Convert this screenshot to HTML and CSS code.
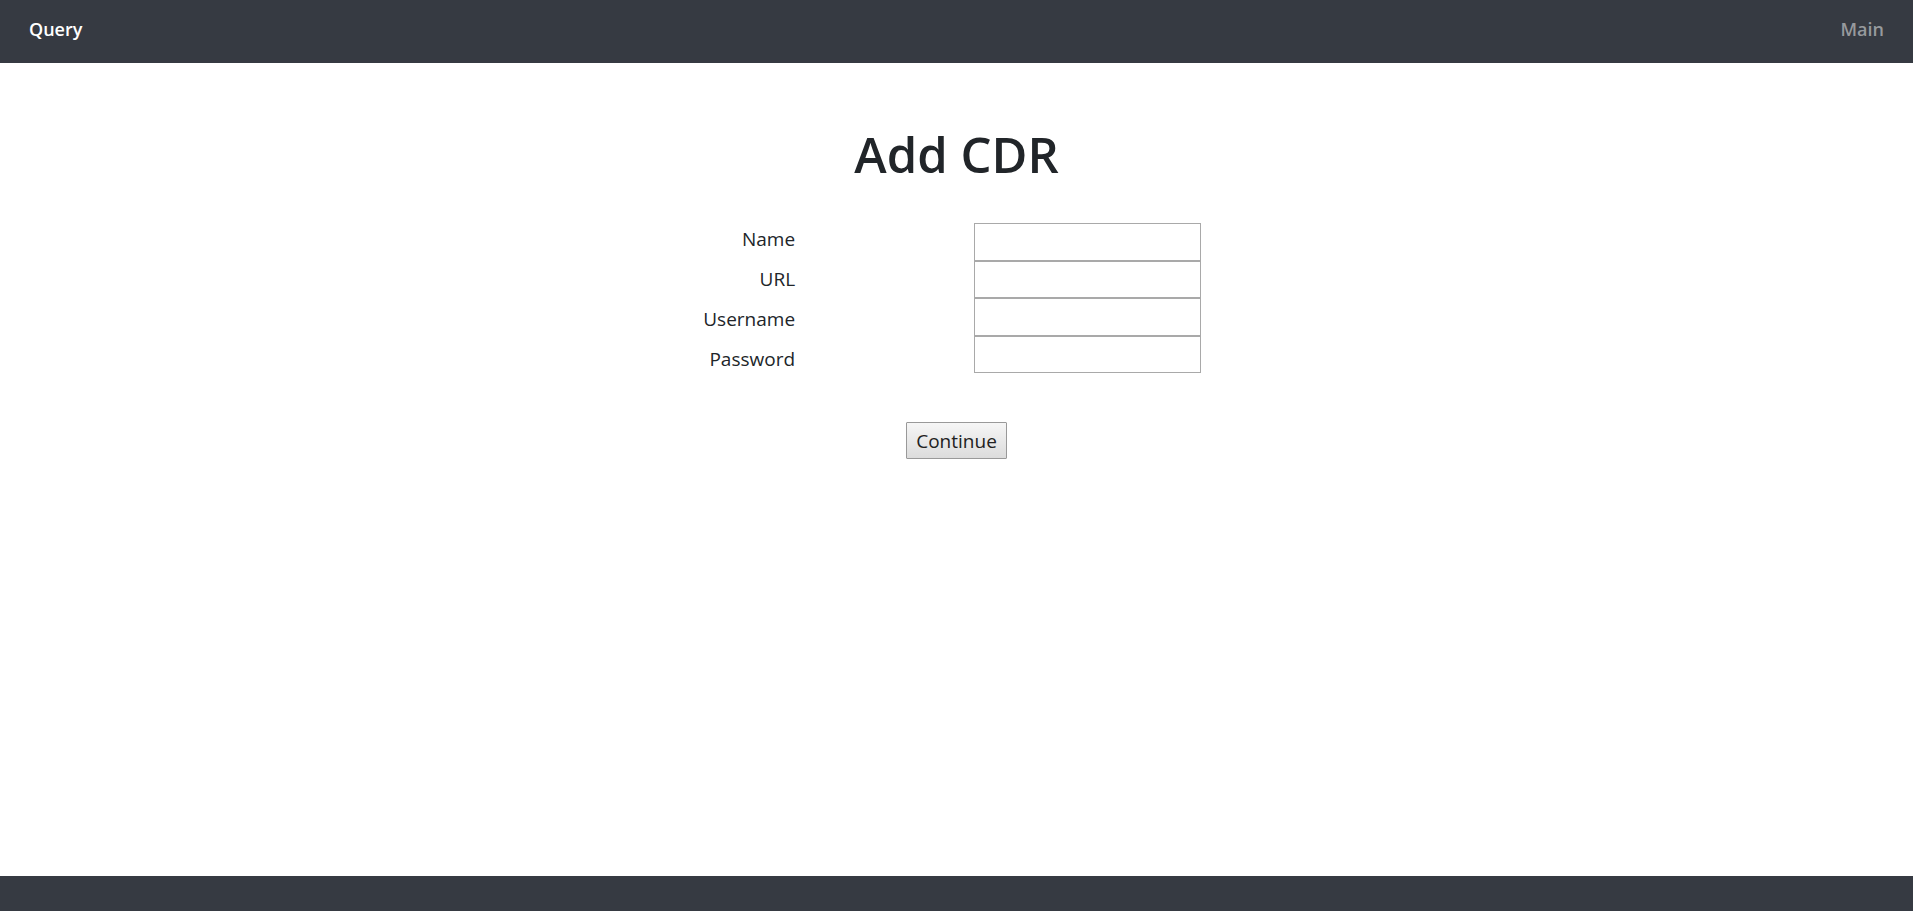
FILE: index.html
```
<!DOCTYPE html>
<html lang="en">
<head>
<meta charset="utf-8">
<meta name="viewport" content="width=device-width, initial-scale=1">
<title>Add CDR</title>
<link rel="stylesheet" href="styles.css">
</head>
<body class="page">
<header class="bar">
<nav class="nav">
<a class="nav-link nav-link-active" href="#query">Query</a>
<a class="nav-link" href="#main">Main</a>
</nav>
</header>
<main class="content">
<h1 class="title">Add CDR</h1>
<form class="form">
<div class="fields">
<div class="labels">
<label for="name">Name</label>
<label for="url">URL</label>
<label for="username">Username</label>
<label for="password">Password</label>
</div>
<div class="inputs">
<input class="input" id="name" type="text">
<input class="input" id="url" type="text">
<input class="input" id="username" type="text">
<input class="input" id="password" type="password">
</div>
</div>
<button class="button" type="button">Continue</button>
</form>
</main>
<footer class="footer"></footer>
</body>
</html>
```
FILE: styles.css
```
* {
  box-sizing: border-box;
}

.page {
  display: flex;
  flex-direction: column;
  min-height: 100vh;
  margin: 0;
  background: #fff;
  color: #212529;
  font: 400 19px/40px "Segoe UI", "Open Sans", sans-serif;
}

.bar {
  padding: 9px 29px 14px;
  background: #363a42;
}

.nav {
  display: flex;
  justify-content: space-between;
}

.nav-link {
  color: #97999d;
  font-size: 18px;
  font-weight: 600;
  text-decoration: none;
}

.nav-link-active {
  color: #fff;
}

.content {
  flex: 1;
}

.title {
  margin: 61px 0 39px;
  font-size: 49px;
  font-weight: 600;
  line-height: 60px;
  text-align: center;
}

.form {
  display: flex;
  flex-direction: column;
  align-items: center;
}

.fields {
  display: grid;
  grid-template-columns: 5fr 7fr;
  align-items: start;
  width: 100%;
}

.labels {
  display: flex;
  flex-direction: column;
  align-items: flex-end;
  padding-right: 2px;
  margin-top: -4px;
}

.inputs {
  display: flex;
  flex-direction: column;
  height: 150px;
  padding-left: 177px;
}

.input {
  flex: 1;
  width: 227px;
  min-height: 0;
  padding: 2px;
  border: 1px solid #a9a9a9;
  background: #fff;
  font: inherit;
  line-height: 30px;
}

.button {
  height: 37px;
  margin-top: 43px;
  padding: 2px 9px 0;
  border: 1px solid #999;
  border-radius: 1px;
  background: linear-gradient(#f6f6f6, #dcdcdc);
  color: #212121;
  font: inherit;
  line-height: 33px;
}

.footer {
  height: 35px;
  background: #363a42;
}
```
